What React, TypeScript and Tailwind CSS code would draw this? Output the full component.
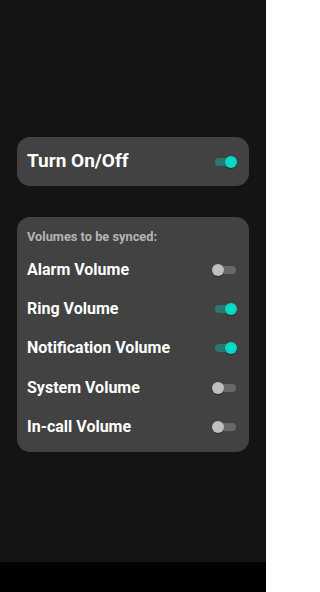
import React from 'react';

interface SwitchProps {
  on: boolean;
}

const Switch: React.FC<SwitchProps> = ({ on }) => (
  <div className="relative w-[25px] h-[12px] flex items-center">
    <div
      className={
        on
          ? 'absolute left-[3px] right-[1px] h-[8px] rounded-full bg-[#2c7770]'
          : 'absolute left-[3px] right-[1px] h-[8px] rounded-full bg-[#686868]'
      }
    />
    <div
      className={
        on
          ? 'absolute right-0 w-[12px] h-[12px] rounded-full bg-[#03dac5] shadow-[0_1px_1px_rgba(0,0,0,0.35)]'
          : 'absolute left-0 w-[12px] h-[12px] rounded-full bg-[#bfbfbf] shadow-[0_1px_1px_rgba(0,0,0,0.35)]'
      }
    />
  </div>
);

const volumes = [
  { label: 'Alarm Volume', on: false },
  { label: 'Ring Volume', on: true },
  { label: 'Notification Volume', on: true },
  { label: 'System Volume', on: false },
  { label: 'In-call Volume', on: false },
];

export default function App() {
  return (
    <div
      className="w-[266px] h-[592px] flex flex-col bg-[#141414]"
      style={{ fontFamily: 'Roboto, "Noto Sans", sans-serif' }}
    >
      <div className="flex-1 px-[17px] pt-[137px]">
        <div className="h-[49px] rounded-[13px] bg-[#424242] flex items-center justify-between pl-[10px] pr-[12px]">
          <span className="text-[19px] font-bold text-white">Turn On/Off</span>
          <Switch on={true} />
        </div>

        <div className="mt-[31px] rounded-[13px] bg-[#424242] pt-[12px] pb-[5px] pl-[10px] pr-[12px]">
          <div className="h-[16px] flex items-center text-[12.8px] font-bold text-[#b4b4b4]">
            Volumes to be synced:
          </div>
          <div className="mt-[5px] flex flex-col">
            {volumes.map((v) => (
              <div key={v.label} className="h-[39.4px] flex items-center justify-between">
                <span className="text-[16px] font-bold text-white">{v.label}</span>
                <Switch on={v.on} />
              </div>
            ))}
          </div>
        </div>
      </div>
      <div className="h-[30px] bg-black" />
    </div>
  );
}
